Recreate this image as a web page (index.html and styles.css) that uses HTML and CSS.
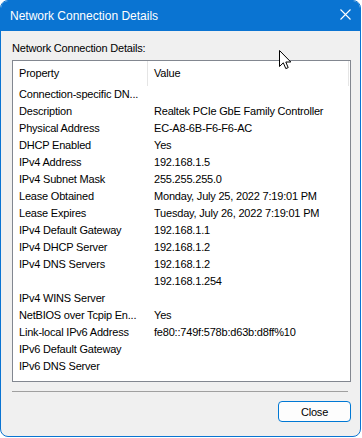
FILE: index.html
```html
<!DOCTYPE html>
<html lang="en">

<head>
    <meta charset="UTF-8">
    <meta name="viewport" content="width=device-width, initial-scale=1.0">
    <title>Network Connection Details</title>
    <link rel="stylesheet" href="styles.css">
</head>

<body class="page">
    <div class="window">
        <!-- Barra de titulo -->
        <div class="window__titlebar">
            <span class="window__title">Network Connection Details</span>
            <svg class="window__close" width="11" height="11" viewBox="0 0 11 11">
                <path d="M0.5 0.5 L10.5 10.5 M10.5 0.5 L0.5 10.5" stroke="#fff" stroke-width="1.1" fill="none" />
            </svg>
        </div>

        <!-- Contenido -->
        <div class="window__body">
            <div class="group__label">Network Connection Details:</div>

            <div class="listview">
                <div class="listview__head">
                    <div class="head__cell head__cell--prop">Property</div>
                    <div class="head__cell head__cell--val">Value</div>
                </div>

                <div class="row"><span class="cell">Connection-specific DN...</span><span class="cell"></span></div>
                <div class="row"><span class="cell">Description</span><span class="cell">Realtek PCIe GbE Family Controller</span></div>
                <div class="row"><span class="cell">Physical Address</span><span class="cell">EC-A8-6B-F6-F6-AC</span></div>
                <div class="row"><span class="cell">DHCP Enabled</span><span class="cell">Yes</span></div>
                <div class="row"><span class="cell">IPv4 Address</span><span class="cell">192.168.1.5</span></div>
                <div class="row"><span class="cell">IPv4 Subnet Mask</span><span class="cell">255.255.255.0</span></div>
                <div class="row"><span class="cell">Lease Obtained</span><span class="cell">Monday, July 25, 2022 7:19:01 PM</span></div>
                <div class="row"><span class="cell">Lease Expires</span><span class="cell">Tuesday, July 26, 2022 7:19:01 PM</span></div>
                <div class="row"><span class="cell">IPv4 Default Gateway</span><span class="cell">192.168.1.1</span></div>
                <div class="row"><span class="cell">IPv4 DHCP Server</span><span class="cell">192.168.1.2</span></div>
                <div class="row"><span class="cell">IPv4 DNS Servers</span><span class="cell">192.168.1.2</span></div>
                <div class="row"><span class="cell"></span><span class="cell">192.168.1.254</span></div>
                <div class="row"><span class="cell">IPv4 WINS Server</span><span class="cell"></span></div>
                <div class="row"><span class="cell">NetBIOS over Tcpip En...</span><span class="cell">Yes</span></div>
                <div class="row"><span class="cell">Link-local IPv6 Address</span><span class="cell">fe80::749f:578b:d63b:d8ff%10</span></div>
                <div class="row"><span class="cell">IPv6 Default Gateway</span><span class="cell"></span></div>
                <div class="row"><span class="cell">IPv6 DNS Server</span><span class="cell"></span></div>
            </div>

            <div class="separator"></div>

            <div class="footer">
                <button class="btn">Close</button>
            </div>
        </div>

        <!-- puntero del mouse -->
        <svg class="cursor" width="13" height="20" viewBox="0 0 13 20">
            <path d="M0.5 0.5 L0.5 16.5 L4.3 12.8 L6.8 18.6 L9.2 17.6 L6.8 12 L11.8 12 Z" fill="#fff" stroke="#000" stroke-width="1" stroke-linejoin="miter" />
        </svg>
    </div>
</body>

</html>
```

FILE: styles.css
```css
* {
    padding: 0;
    margin: 0;
    box-sizing: border-box;
}

.page {
    background-color: #ffffff;
    font-family: "Liberation Sans", Arial, sans-serif;
    color: #000;
}

/* Ventana */
.window {
    position: relative;
    width: 361px;
    height: 437px;
    border: 1px solid #0a74d2;
    border-radius: 8px;
    overflow: hidden;
    display: flex;
    flex-direction: column;
    background-color: #f0f0f0;
}

.window__titlebar {
    height: 30px;
    display: flex;
    align-items: center;
    justify-content: space-between;
    padding: 0 9px 1px 9px;
    background-color: #0a74d2;
}

.window__title {
    color: #ffffff;
    font-size: 12px;
}

.window__close {
    display: block;
    margin-top: -3px;
}

/* Cuerpo */
.window__body {
    flex: 1;
    padding: 11px 9px 0 11px;
    font-size: 11px;
    letter-spacing: -0.2px;
}

.group__label {
    height: 13px;
    line-height: 13px;
    margin-bottom: 5px;
}

/* Lista */
.listview {
    height: 322px;
    border: 1px solid #828790;
    background-color: #ffffff;
}

.listview__head {
    display: grid;
    grid-template-columns: 135px 1fr;
    height: 25px;
    line-height: 25px;
}

.head__cell {
    padding-left: 6px;
}

.head__cell--prop {
    border-right: 1px solid #e5e5e5;
}

.head__cell--val {
    border-right: 1px solid #e5e5e5;
    margin-right: 1px;
}

.row {
    display: grid;
    grid-template-columns: 135px 1fr;
    height: 17px;
    line-height: 17px;
}

.cell {
    padding-left: 6px;
    white-space: nowrap;
}

.separator {
    margin-top: 9px;
    width: 336px;
    height: 1px;
    background-color: #a0a0a0;
}

/* Boton */
.footer {
    display: flex;
    justify-content: flex-end;
    margin-top: 9px;
}

.btn {
    width: 73px;
    height: 21px;
    border: 1px solid #0078d4;
    border-radius: 4px;
    background-color: #fdfdfd;
    font-family: "Liberation Sans", Arial, sans-serif;
    font-size: 11px;
    letter-spacing: -0.2px;
    color: #000;
}

.cursor {
    position: absolute;
    left: 278px;
    top: 49px;
}
```
